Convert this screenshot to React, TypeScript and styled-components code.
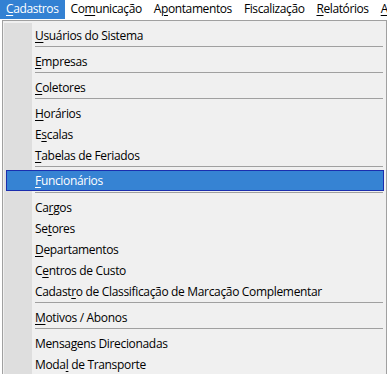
import React from 'react';
import styled, { createGlobalStyle } from 'styled-components';

const GlobalStyle = createGlobalStyle`
  html, body {
    margin: 0;
    padding: 0;
    background: #ffffff;
    overflow: hidden;
  }
  body {
    font-family: 'Open Sans', 'Noto Sans', sans-serif;
    font-size: 12px;
    color: #000;
  }
`;

const Screen = styled.div`
  width: 387px;
  height: 374px;
  overflow: hidden;
  background: #ffffff;
`;

const MenuBar = styled.div`
  display: flex;
  height: 19px;
  background: #ffffff;
  white-space: nowrap;
  margin-bottom: 1px;
`;

const BarItem = styled.div<{ $active?: boolean }>`
  padding: 0 6px;
  height: 19px;
  line-height: 18px;
  letter-spacing: -0.4px;
  background: ${(p) => (p.$active ? '#3381d3' : 'transparent')};
  color: ${(p) => (p.$active ? '#ffffff' : '#000000')};
`;

const Popup = styled.div`
  margin-left: 2px;
  width: 381px;
  border: 1px solid #a0a0a0;
  border-bottom: none;
  background: #f0f0f0;
  padding: 4px 1px 0 1px;
  display: flex;
  flex-direction: column;
  position: relative;
  height: 360px;
  &::before {
    content: '';
    position: absolute;
    left: 1px;
    top: 2px;
    bottom: 0;
    width: 28px;
    background: #dedede;
  }
`;

const Item = styled.div<{ $selected?: boolean }>`
  position: relative;
  height: 21px;
  line-height: 20px;
  padding-left: 28px;
  margin: 0 1px 0 2px;
  letter-spacing: -0.33px;
  white-space: nowrap;
  box-sizing: border-box;
  color: ${(p) => (p.$selected ? '#ffffff' : '#000000')};
  background: ${(p) => (p.$selected ? '#3683d3' : 'transparent')};
  border: 1px solid ${(p) => (p.$selected ? '#1b2eae' : 'transparent')};
  top: ${(p) => (p.$selected ? '-1px' : '0')};
`;

const Separator = styled.div`
  height: 5px;
  margin-left: 31px;
  margin-right: 2px;
  position: relative;
  &::after {
    content: '';
    position: absolute;
    left: 0;
    right: 0;
    top: 0;
    height: 1px;
    background: #a0a0a0;
  }
`;

const Key = styled.span`
  text-decoration: underline;
  text-underline-offset: 2px;
`;

type Entry = { label: string; key?: number; selected?: boolean } | 'sep';

const barItems: { label: string; key?: number; active?: boolean }[] = [
  { label: 'Cadastros', key: 0, active: true },
  { label: 'Comunicação', key: 2 },
  { label: 'Apontamentos', key: 1 },
  { label: 'Fiscalização' },
  { label: 'Relatórios', key: 0 },
  { label: 'Auditoria', key: 0 },
];

const entries: Entry[] = [
  { label: 'Usuários do Sistema', key: 0 },
  'sep',
  { label: 'Empresas', key: 0 },
  'sep',
  { label: 'Coletores', key: 0 },
  'sep',
  { label: 'Horários', key: 0 },
  { label: 'Escalas', key: 1 },
  { label: 'Tabelas de Feriados', key: 0 },
  'sep',
  { label: 'Funcionários', key: 0, selected: true },
  'sep',
  { label: 'Cargos', key: 2 },
  { label: 'Setores', key: 2 },
  { label: 'Departamentos', key: 0 },
  { label: 'Centros de Custo', key: 1 },
  { label: 'Cadastro de Classificação de Marcação Complementar', key: 6 },
  'sep',
  { label: 'Motivos / Abonos', key: 0 },
  'sep',
  { label: 'Mensagens Direcionadas', key: 5 },
  { label: 'Modal de Transporte', key: 4 },
];

const Label = ({ label, k }: { label: string; k?: number }) => {
  if (k === undefined) return <>{label}</>;
  return (
    <>
      {label.slice(0, k)}
      <Key>{label[k]}</Key>
      {label.slice(k + 1)}
    </>
  );
};

export default function App() {
  return (
    <Screen>
      <GlobalStyle />
      <MenuBar>
        {barItems.map((b) => (
          <BarItem key={b.label} $active={b.active}>
            <Label label={b.label} k={b.key} />
          </BarItem>
        ))}
      </MenuBar>
      <Popup>
        {entries.map((e, i) =>
          e === 'sep' ? (
            <Separator key={i} />
          ) : (
            <Item key={i} $selected={e.selected}>
              <Label label={e.label} k={e.key} />
            </Item>
          )
        )}
      </Popup>
    </Screen>
  );
}
